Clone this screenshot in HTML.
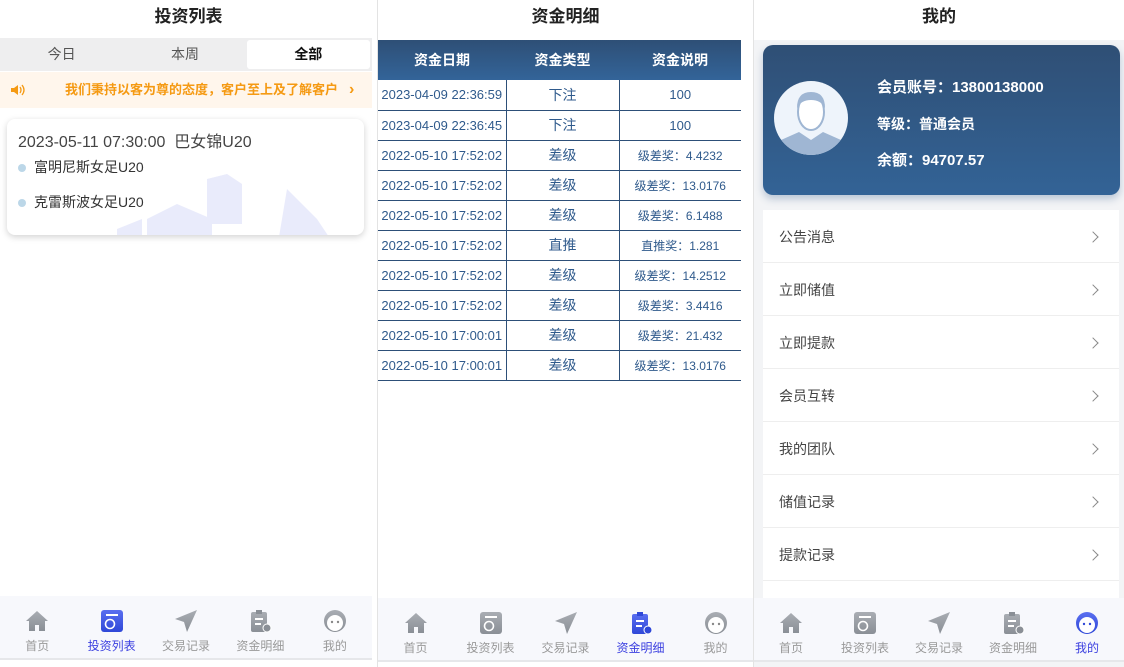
<!DOCTYPE html>
<html><head><meta charset="utf-8"><style>
*{margin:0;padding:0;box-sizing:border-box}
body{width:1124px;height:667px;background:#fff;font-family:"Liberation Sans","Noto Sans CJK SC",sans-serif;position:relative;overflow:hidden}
.p{position:absolute;top:0;height:667px}
.title{position:absolute;top:0;left:0;right:0;height:36px;line-height:34px;text-align:center;font-size:17px;font-weight:bold;color:#222}
.nav{position:absolute;left:0;height:64px;background:#f7f8fc;display:flex;border-bottom:2px solid #e6e7ea}
.nav div{flex:1;text-align:center;font-size:12px;color:#999;padding-top:12px}
.nav div.on{color:#3b3fe0}
.nav svg{display:block;margin:0 auto 3px;width:26px;height:26px}
.tab{position:absolute;top:38px;left:0;width:372px;height:33px;background:#eeeeef;display:flex;font-size:14px;color:#555}
.tab div{flex:1;text-align:center;line-height:33px}
.tab .a{background:#fff;margin:2px 2px 2px 0;line-height:29px;color:#111;border-radius:3px;font-weight:bold}
.notice{position:absolute;top:72px;left:0;width:372px;height:36px;background:#fff6ec;color:#f59a13;font-size:13px;line-height:36px;font-weight:bold}
.card{position:absolute;top:119px;left:7px;width:357px;height:116px;background:#fff;border-radius:8px;box-shadow:0 2px 7px rgba(0,0,0,.18);overflow:hidden}
table{border-collapse:collapse;position:absolute;top:40px;left:0;width:363px}
th{height:40px;color:#fff;font-size:14px;font-weight:bold}
td{height:30px;border-bottom:1px solid #2d4f78;color:#2f5a8c;text-align:center;font-size:13px}
td+td{border-left:1px solid #2d4f78}
td.s{font-size:12px}
.menu{position:absolute;left:9px;width:356px;background:#fff}
.menu div{height:53px;line-height:55px;padding-left:16px;font-size:14px;color:#444;border-bottom:1px solid #eee;position:relative}
.menu div:after{content:"";position:absolute;right:22px;top:23px;width:7px;height:7px;border-right:1.5px solid #888;border-top:1.5px solid #888;transform:rotate(45deg)}
</style></head><body>

<svg width="0" height="0" style="position:absolute">
<defs>
<linearGradient id="g" x1="0" y1="0" x2="0" y2="1"><stop offset="0" stop-color="#a9adb3"/><stop offset="1" stop-color="#8a8f96"/></linearGradient>
<linearGradient id="b" x1="0" y1="0" x2="0" y2="1"><stop offset="0" stop-color="#5a6ff0"/><stop offset="1" stop-color="#2f48d8"/></linearGradient>
</defs></svg>

<!-- Panel 1 -->
<div class="p" style="left:0;width:378px;border-right:1px solid #e3e3e3">
<div class="title">投资列表</div>
<div class="tab"><div>今日</div><div>本周</div><div class="a">全部</div></div>
<div class="notice" style="overflow:hidden"><svg style="position:absolute;left:10px;top:12px" width="16" height="12" viewBox="0 0 16 12"><path d="M1 4h3l4-3v10l-4-3H1z" fill="#f59a13"/><path d="M10 3q2 3 0 6M12 1q4 5 0 10" stroke="#f59a13" fill="none" stroke-width="1.3"/></svg><span style="position:absolute;left:65px;white-space:nowrap;width:278px;overflow:hidden">我们秉持以客为尊的态度，客户至上及了解客户</span><span style="position:absolute;left:349px;font-size:16px">›</span></div>
<div class="card">
<svg style="position:absolute;left:110px;top:40px" width="240" height="80"><g fill="#e9ebfb"><path d="M90 20 l20 -5 l15 10 v40 h-35z"/><path d="M30 60 l30 -15 l35 15 v30 h-65z"/><path d="M170 30 l30 30 l20 30 h-60z"/><path d="M0 70 l25 -10 v30 h-25z"/></g></svg>
<div style="position:absolute;left:11px;top:9px;font-size:16px;color:#444">2023-05-11 07:30:00 &nbsp;巴女锦U20</div>
<div style="position:absolute;left:11px;top:38px;font-size:14px;color:#333"><span style="display:inline-block;width:8px;height:8px;border-radius:50%;background:#bcd7e8;margin-right:8px"></span>富明尼斯女足U20</div>
<div style="position:absolute;left:11px;top:73px;font-size:14px;color:#333"><span style="display:inline-block;width:8px;height:8px;border-radius:50%;background:#bcd7e8;margin-right:8px"></span>克雷斯波女足U20</div>
</div>
<div class="nav" style="top:596px;width:372px">
<div><svg viewBox="0 0 26 26"><path d="M13 3 L2 13 h3 v10 h6 v-6 h4 v6 h6 v-10 h3z" fill="url(#g)"/></svg>首页</div>
<div class="on"><svg viewBox="0 0 26 26"><rect x="2" y="2" width="22" height="22" rx="3" fill="url(#b)"/><rect x="7" y="6" width="12" height="2" fill="#fff"/><circle cx="11" cy="16" r="4.5" fill="none" stroke="#fff" stroke-width="1.6"/></svg>投资列表</div>
<div><svg viewBox="0 0 26 26"><path d="M24 2 L2 11 l9 3 3 10z" fill="url(#g)"/></svg>交易记录</div>
<div><svg viewBox="0 0 26 26"><rect x="4" y="4" width="16" height="20" rx="2" fill="url(#g)"/><rect x="9" y="2" width="6" height="4" fill="#8a8f96"/><rect x="8" y="10" width="8" height="2" fill="#fff"/><rect x="8" y="15" width="6" height="2" fill="#fff"/><circle cx="20" cy="20" r="4" fill="#8a8f96" stroke="#fff"/></svg>资金明细</div>
<div><svg viewBox="0 0 26 26"><circle cx="13" cy="13" r="11" fill="url(#g)"/><circle cx="13" cy="15" r="8" fill="#fff"/><circle cx="10" cy="14" r="1.2" fill="#888"/><circle cx="16" cy="14" r="1.2" fill="#888"/></svg>我的</div>
</div>
</div>

<!-- Panel 2 -->
<div class="p" style="left:378px;width:376px;border-right:1px solid #e3e3e3">
<div class="title">资金明细</div>
<table>
<tr style="background:linear-gradient(#2e4f76,#336499)"><th style="width:128px">资金日期</th><th style="width:113px">资金类型</th><th>资金说明</th></tr>
<tr><td>2023-04-09 22:36:59</td><td style="font-size:14px">下注</td><td>100</td></tr>
<tr><td>2023-04-09 22:36:45</td><td style="font-size:14px">下注</td><td>100</td></tr>
<tr><td>2022-05-10 17:52:02</td><td style="font-size:14px">差级</td><td class="s">级差奖：4.4232</td></tr>
<tr><td>2022-05-10 17:52:02</td><td style="font-size:14px">差级</td><td class="s">级差奖：13.0176</td></tr>
<tr><td>2022-05-10 17:52:02</td><td style="font-size:14px">差级</td><td class="s">级差奖：6.1488</td></tr>
<tr><td>2022-05-10 17:52:02</td><td style="font-size:14px">直推</td><td class="s">直推奖：1.281</td></tr>
<tr><td>2022-05-10 17:52:02</td><td style="font-size:14px">差级</td><td class="s">级差奖：14.2512</td></tr>
<tr><td>2022-05-10 17:52:02</td><td style="font-size:14px">差级</td><td class="s">级差奖：3.4416</td></tr>
<tr><td>2022-05-10 17:00:01</td><td style="font-size:14px">差级</td><td class="s">级差奖：21.432</td></tr>
<tr><td>2022-05-10 17:00:01</td><td style="font-size:14px">差级</td><td class="s">级差奖：13.0176</td></tr>
</table>
<div class="nav" style="top:598px;width:375px">
<div><svg viewBox="0 0 26 26"><path d="M13 3 L2 13 h3 v10 h6 v-6 h4 v6 h6 v-10 h3z" fill="url(#g)"/></svg>首页</div>
<div><svg viewBox="0 0 26 26"><rect x="2" y="2" width="22" height="22" rx="3" fill="url(#g)"/><rect x="7" y="6" width="12" height="2" fill="#fff"/><circle cx="11" cy="16" r="4.5" fill="none" stroke="#fff" stroke-width="1.6"/></svg>投资列表</div>
<div><svg viewBox="0 0 26 26"><path d="M24 2 L2 11 l9 3 3 10z" fill="url(#g)"/></svg>交易记录</div>
<div class="on"><svg viewBox="0 0 26 26"><rect x="4" y="4" width="16" height="20" rx="2" fill="url(#b)"/><rect x="9" y="2" width="6" height="4" fill="#2f48d8"/><rect x="8" y="10" width="8" height="2" fill="#fff"/><rect x="8" y="15" width="6" height="2" fill="#fff"/><circle cx="20" cy="20" r="4" fill="#2f48d8" stroke="#fff"/></svg>资金明细</div>
<div><svg viewBox="0 0 26 26"><circle cx="13" cy="13" r="11" fill="url(#g)"/><circle cx="13" cy="15" r="8" fill="#fff"/><circle cx="10" cy="14" r="1.2" fill="#888"/><circle cx="16" cy="14" r="1.2" fill="#888"/></svg>我的</div>
</div>
</div>

<!-- Panel 3 -->
<div class="p" style="left:754px;width:370px;background:#f3f4f6">
<div class="title" style="background:#fff;height:40px">我的</div>
<div style="position:absolute;left:9px;top:45px;width:357px;height:150px;border-radius:10px;background:linear-gradient(#2f4f75,#336396);box-shadow:0 4px 8px rgba(50,90,140,.3)">
<svg style="position:absolute;left:10px;top:35px" width="76" height="76" viewBox="0 0 76 76"><defs><clipPath id="c"><circle cx="38" cy="38" r="37"/></clipPath></defs><circle cx="38" cy="38" r="37" fill="#eef4fb"/><g clip-path="url(#c)"><path d="M0 76 L8 60 L26 52 L38 60 L50 52 L68 60 L76 76z" fill="#9fb6d3"/><ellipse cx="38" cy="32" rx="13" ry="18" fill="#fff" stroke="#9fb6d3" stroke-width="2"/><path d="M24 28 Q24 12 38 12 Q52 12 52 28 Q48 20 38 20 Q28 20 24 28z" fill="#9fb6d3"/></g></svg>
<div style="position:absolute;left:114px;top:34px;color:#fff;font-size:15px;line-height:18px;font-weight:bold">会员账号：13800138000</div>
<div style="position:absolute;left:114px;top:69px;color:#fff;font-size:14px;font-weight:bold">等级：普通会员</div>
<div style="position:absolute;left:114px;top:104px;color:#fff;font-size:15px;font-weight:bold">余额：94707.57</div>
</div>
<div class="menu" style="top:210px">
<div>公告消息</div><div>立即储值</div><div>立即提款</div><div>会员互转</div><div>我的团队</div><div>储值记录</div><div>提款记录</div><div style="height:40px"></div>
</div>
<div class="nav" style="top:598px;width:370px">
<div><svg viewBox="0 0 26 26"><path d="M13 3 L2 13 h3 v10 h6 v-6 h4 v6 h6 v-10 h3z" fill="url(#g)"/></svg>首页</div>
<div><svg viewBox="0 0 26 26"><rect x="2" y="2" width="22" height="22" rx="3" fill="url(#g)"/><rect x="7" y="6" width="12" height="2" fill="#fff"/><circle cx="11" cy="16" r="4.5" fill="none" stroke="#fff" stroke-width="1.6"/></svg>投资列表</div>
<div><svg viewBox="0 0 26 26"><path d="M24 2 L2 11 l9 3 3 10z" fill="url(#g)"/></svg>交易记录</div>
<div><svg viewBox="0 0 26 26"><rect x="4" y="4" width="16" height="20" rx="2" fill="url(#g)"/><rect x="9" y="2" width="6" height="4" fill="#8a8f96"/><rect x="8" y="10" width="8" height="2" fill="#fff"/><rect x="8" y="15" width="6" height="2" fill="#fff"/><circle cx="20" cy="20" r="4" fill="#8a8f96" stroke="#fff"/></svg>资金明细</div>
<div class="on"><svg viewBox="0 0 26 26"><circle cx="13" cy="13" r="11" fill="url(#b)"/><circle cx="13" cy="15" r="8" fill="#fff"/><circle cx="10" cy="14" r="1.2" fill="#2f48d8"/><circle cx="16" cy="14" r="1.2" fill="#2f48d8"/></svg>我的</div>
</div>
</div>
</body></html>
